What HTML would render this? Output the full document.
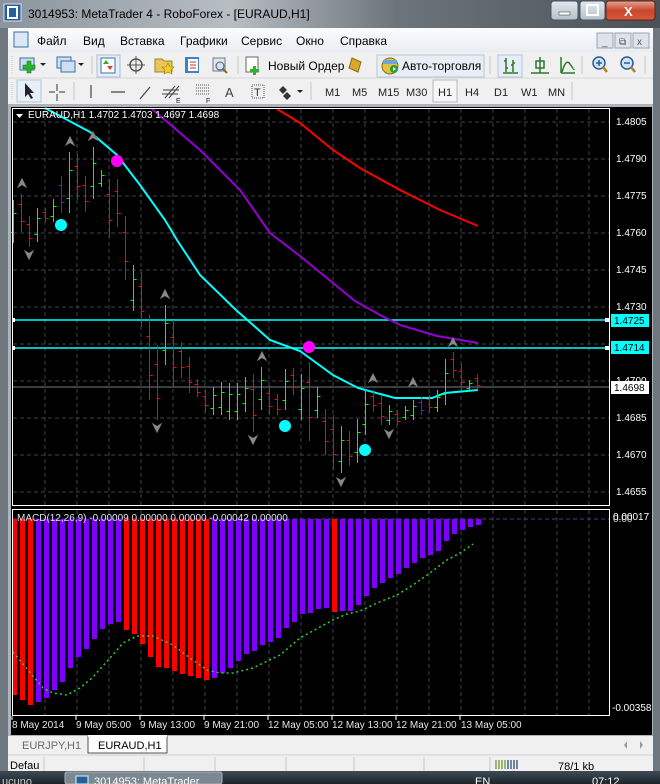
<!DOCTYPE html>
<html><head><meta charset="utf-8"><style>
html,body{margin:0;padding:0;width:660px;height:784px;overflow:hidden;background:#6c7680;}
svg{display:block;font-family:"Liberation Sans",sans-serif;}
</style></head><body>
<svg id="s" width="660" height="784" viewBox="0 0 660 784" xmlns="http://www.w3.org/2000/svg">
<defs>
<linearGradient id="tb" x1="0" y1="0" x2="1" y2="0"><stop offset="0" stop-color="#8b949c"/><stop offset=".35" stop-color="#b7bec4"/><stop offset=".6" stop-color="#6d757c"/><stop offset="1" stop-color="#4a5258"/></linearGradient>
<linearGradient id="mb" x1="0" y1="0" x2="0" y2="1"><stop offset="0" stop-color="#fbfcfd"/><stop offset="1" stop-color="#e9edf2"/></linearGradient>
<linearGradient id="cl" x1="0" y1="0" x2="0" y2="1"><stop offset="0" stop-color="#e8a493"/><stop offset=".5" stop-color="#c9462c"/><stop offset="1" stop-color="#d8593c"/></linearGradient>
<linearGradient id="bt" x1="0" y1="0" x2="0" y2="1"><stop offset="0" stop-color="#e3e8ee"/><stop offset="1" stop-color="#b5bfca"/></linearGradient>
<linearGradient id="tk" x1="0" y1="0" x2="0" y2="1"><stop offset="0" stop-color="#3d4a55"/><stop offset="1" stop-color="#1c252d"/></linearGradient>
</defs>
<rect x="0" y="0" width="660" height="30" fill="url(#tb)"/>
<rect x="0" y="28" width="660" height="756" fill="#6f777e"/>
<rect x="4" y="4" width="17" height="17" fill="#2a5d9c" stroke="#d7e3f0"/>
<rect x="8" y="7" width="9" height="11" fill="none" stroke="#fff" stroke-width="2"/>
<text x="28" y="18" font-size="12" fill="#000">3014953: MetaTrader 4 - RoboForex - [EURAUD,H1]</text>
<rect x="551" y="1" width="27" height="19" rx="3" fill="url(#bt)" stroke="#4a5560"/>
<rect x="559" y="12" width="11" height="3" fill="#fff" stroke="#333" stroke-width=".5"/>
<rect x="580" y="1" width="25" height="19" rx="3" fill="url(#bt)" stroke="#4a5560"/>
<rect x="587" y="5" width="11" height="10" fill="none" stroke="#fff" stroke-width="2"/>
<rect x="606" y="1" width="49" height="19" rx="3" fill="url(#cl)" stroke="#5a2418"/>
<text x="624" y="16" font-size="13" font-weight="bold" fill="#fff">X</text>
<rect x="8" y="28" width="645" height="742" fill="#f0f0f0"/>
<rect x="8" y="28" width="645" height="24" fill="url(#mb)"/>
<rect x="14" y="32" width="14" height="15" fill="#dce8f5" stroke="#3d6ea8"/>
<g font-size="12" fill="#000">
<text x="37" y="45">Файл</text><text x="83" y="45">Вид</text><text x="120" y="45">Вставка</text><text x="180" y="45">Графики</text><text x="241" y="45">Сервис</text><text x="296" y="45">Окно</text><text x="340" y="45">Справка</text>
</g>
<g fill="#dfe4ea" stroke="#9aa5b1"><rect x="597" y="33" width="16" height="15"/><rect x="615" y="33" width="16" height="15"/><rect x="633" y="33" width="16" height="15"/></g>
<g font-size="10" fill="#555"><text x="602" y="45">_</text><text x="619" y="45">⧉</text><text x="637" y="45">x</text></g>
<rect x="8" y="52" width="645" height="26" fill="#f0f0f0"/>
<line x1="8" y1="78" x2="653" y2="78" stroke="#d8d8d8"/>
<g stroke="#c8c8c8"><line x1="12" y1="56" x2="12" y2="74" stroke-dasharray="1 1"/><line x1="92" y1="56" x2="92" y2="74"/><line x1="238" y1="56" x2="238" y2="74"/><line x1="490" y1="56" x2="490" y2="74"/><line x1="582" y1="56" x2="582" y2="74"/><line x1="645" y1="56" x2="645" y2="74"/></g>
<rect x="20" y="58" width="14" height="12" fill="#cfe0f2" stroke="#3d6ea8"/><path d="M27 61h4v4h4v4h-4v4h-4v-4h-4v-4h4z" fill="#2cb52c" stroke="#1b6e1b" stroke-width=".6"/><path d="M40 63l3 3 3-3z" fill="#222"/>
<rect x="57" y="57" width="14" height="11" fill="#cfe0f2" stroke="#3d6ea8"/><rect x="61" y="61" width="14" height="11" fill="#cfe0f2" stroke="#3d6ea8"/><path d="M78 63l3 3 3-3z" fill="#222"/>
<rect x="97" y="55" width="23" height="22" fill="#e6eef7" stroke="#a9bfd7"/><rect x="101" y="58" width="14" height="15" fill="#fff" stroke="#3d6ea8"/><path d="M106 60l3 4h-6z" fill="#2cb52c"/><path d="M110 70l3-4h-6z" fill="#e04020"/>
<circle cx="136" cy="65" r="6" fill="none" stroke="#555" stroke-width="1.5"/><path d="M136 56v18M127 65h18" stroke="#555"/>
<path d="M155 59h7l2 2h8v11h-17z" fill="#e9c55a" stroke="#a58420"/><path d="M168 63l2 4 4 0-3 3 1 4-4-2-4 2 1-4-3-3 4 0z" fill="#f5d020" stroke="#9a7a10" stroke-width=".6"/>
<rect x="185" y="57" width="14" height="16" fill="#3d7fd1"/><rect x="188" y="59" width="10" height="12" fill="#fff"/><g stroke="#c33" stroke-width="1"><line x1="190" y1="62" x2="196" y2="62"/><line x1="190" y1="65" x2="196" y2="65"/><line x1="190" y1="68" x2="196" y2="68"/></g>
<rect x="213" y="58" width="12" height="13" fill="#dde6ef" stroke="#6b7c8f"/><circle cx="220" cy="66" r="4" fill="#cfe3f4" stroke="#555"/><path d="M223 69l4 4" stroke="#8b6b20" stroke-width="2"/>
<rect x="246" y="57" width="12" height="15" fill="#fff" stroke="#666"/><path d="M253 66h3v3h3v3h-3v3h-3v-3h-3v-3h3z" fill="#2cb52c"/>
<text x="268" y="70" font-size="12" fill="#000">Новый Ордер</text>
<path d="M352 58l9 4-3 10-9-4z" fill="#d9a830" stroke="#8a6a10"/>
<rect x="377" y="55" width="107" height="22" fill="#e8eef5" stroke="#b6c6d8"/>
<circle cx="390" cy="66" r="8" fill="#e6c040" stroke="#8a7010"/><path d="M383 60h14v4h-14z" fill="#6fa5d9"/><circle cx="394" cy="69" r="4" fill="#2c9c3a"/><path d="M393 67l3 2-3 2z" fill="#fff"/>
<text x="402" y="70" font-size="12" fill="#000">Авто-торговля</text>
<rect x="498" y="55" width="24" height="22" fill="#e6eef7" stroke="#b6c6d8"/>
<g stroke="#2a7a2a" stroke-width="1.5" fill="none"><path d="M506 58v14M504 61h2M506 68h2M513 60v12M511 65h2M513 63h2M503 73h15"/>
<path d="M540 57v16M536 61h8v7h-8zM531 73h18" /><path d="M561 73h14M562 72q4-14 8-8t4 5M561 57v16"/></g>
<circle cx="599" cy="63" r="6" fill="#cfe3f4" stroke="#2a5a9a" stroke-width="1.5"/><path d="M596 63h6M599 60v6" stroke="#2a5a9a" stroke-width="1.5"/><path d="M603 67l4 5" stroke="#b08020" stroke-width="2.5"/>
<circle cx="627" cy="63" r="6" fill="#cfe3f4" stroke="#2a5a9a" stroke-width="1.5"/><path d="M624 63h6" stroke="#2a5a9a" stroke-width="1.5"/><path d="M631 67l4 5" stroke="#b08020" stroke-width="2.5"/>
<g stroke="#c8c8c8"><line x1="12" y1="82" x2="12" y2="100" stroke-dasharray="1 1"/><line x1="74" y1="82" x2="74" y2="100"/><line x1="311" y1="82" x2="311" y2="100"/><line x1="572" y1="82" x2="572" y2="100"/></g>
<rect x="17" y="80" width="24" height="22" fill="#e6eef7" stroke="#b6c6d8"/>
<path d="M25 83v14l3-3 3 5 2-1-3-5h4z" fill="#222"/>
<path d="M57 84v7M57 94v7M49 92h6M59 92h6" stroke="#333"/>
<path d="M91 85v13M111 92h14M140 99l10-12" stroke="#444" stroke-width="1.2"/>
<path d="M165 98l10-12M169 98l10-12M163 90h16M162 94h16" stroke="#444"/><text x="176" y="103" font-size="7" fill="#222">E</text>
<g stroke="#555" stroke-dasharray="1 1"><path d="M196 85h14M196 88h14M196 91h14M196 94h14"/></g><text x="206" y="103" font-size="7" fill="#222">F</text>
<text x="225" y="97" font-size="13" fill="#444">A</text>
<rect x="252" y="85" width="12" height="13" fill="none" stroke="#555" stroke-dasharray="1 1"/><text x="254" y="96" font-size="11" fill="#333">T</text>
<path d="M283 86l4 4-4 4-4-4zM287 92l4 4-4 4-4-4z" fill="#333"/><path d="M297 90l3 3 3-3z" fill="#222"/>
<rect x="433" y="80" width="24" height="22" fill="#f6f6f6" stroke="#b8b8b8"/>
<g font-size="11" fill="#222"><text x="325" y="96">M1</text><text x="352" y="96">M5</text><text x="378" y="96">M15</text><text x="406" y="96">M30</text><text x="438" y="96">H1</text><text x="465" y="96">H4</text><text x="494" y="96">D1</text><text x="521" y="96">W1</text><text x="548" y="96">MN</text></g>
<rect x="8" y="104" width="645" height="632" fill="#aeb4ba"/>
<rect x="11" y="107" width="641" height="628" fill="#000"/>
<g id="grid" stroke="#3c444c" stroke-dasharray="4 3" stroke-width="1"></g>
<g id="chart"></g>
<rect x="12.5" y="108.5" width="597" height="397" fill="none" stroke="#fff"/>
<rect x="12.5" y="509.5" width="597" height="206" fill="none" stroke="#fff"/>
<g font-size="10" fill="#fff">
<path d="M16 114h7l-3.5 4z" fill="#fff"/>
<text x="28" y="118">EURAUD,H1  1.4702 1.4703 1.4697 1.4698</text>
<text x="616" y="125">1.4805</text><text x="616" y="162">1.4790</text><text x="616" y="199">1.4775</text><text x="616" y="236">1.4760</text><text x="616" y="273">1.4745</text><text x="616" y="310">1.4730</text><text x="616" y="384">1.4700</text><text x="616" y="421">1.4685</text><text x="616" y="458">1.4670</text><text x="616" y="495">1.4655</text>
</g>
<rect x="611" y="314" width="38" height="13" fill="#00ffff"/><text x="614" y="324" font-size="10" fill="#000">1.4725</text>
<rect x="611" y="341" width="38" height="13" fill="#00ffff"/><text x="614" y="351" font-size="10" fill="#000">1.4714</text>
<rect x="611" y="381" width="38" height="13" fill="#fff"/><text x="614" y="391" font-size="10" fill="#000">1.4698</text>
<g font-size="10" fill="#fff"><text x="613" y="520">0.00017</text><text x="613" y="522" opacity=".8">0.00</text><text x="612" y="711">-0.00358</text>
<text x="17" y="521" fill="#dde4ee">MACD(12,26,9) -0.00009 0.00000 0.00000 -0.00042 0.00000</text>
<g fill="#e6e6e6"><text x="12" y="728">8 May 2014</text><text x="76" y="728">9 May 05:00</text><text x="140" y="728">9 May 13:00</text><text x="204" y="728">9 May 21:00</text><text x="268" y="728">12 May 05:00</text><text x="332" y="728">12 May 13:00</text><text x="396" y="728">12 May 21:00</text><text x="461" y="728">13 May 05:00</text></g></g>
<g stroke="#fff"><path d="M12 716v4M76 716v4M140 716v4M204 716v4M268 716v4M332 716v4M396 716v4M460 716v4"/></g>
<rect x="8" y="736" width="645" height="19" fill="#f0f0f0"/>
<text x="22" y="749" font-size="11" fill="#6a6a6a">EURJPY,H1</text>
<rect x="88" y="736" width="79" height="17" fill="#fff" stroke="#555"/>
<rect x="88" y="735" width="79" height="2" fill="#fff"/>
<text x="98" y="749" font-size="11" fill="#000">EURAUD,H1</text>
<path d="M627 741v8l-3-4zM640 741v8l3-4z" fill="#999"/>
<rect x="8" y="755" width="645" height="16" fill="#f0f0f0"/><line x1="8" y1="755" x2="653" y2="755" stroke="#d0d0d0"/>
<g stroke="#c8c8c8"><path d="M44 757v14M144 757v14M215 757v14M286 757v14M354 757v14M424 757v14M490 757v14"/></g>
<text x="10" y="769" font-size="11" fill="#000">Defau</text>
<g stroke-width="1.2"><path d="M496 760v9M499 760v9M502 760v9M505 760v9" stroke="#6c8c20"/><path d="M508 760v9M511 760v9M514 760v9M517 760v9" stroke="#1c3c7a"/></g>
<text x="558" y="770" font-size="11" fill="#000">78/1 kb</text>
<rect x="0" y="771" width="660" height="13" fill="url(#tk)"/>
<rect x="65" y="772" width="157" height="12" rx="2" fill="#7c8791" stroke="#aab3bc"/>
<rect x="76" y="776" width="12" height="8" fill="#2a5d9c" stroke="#cfe"/>
<text x="94" y="785" font-size="11" fill="#fff">3014953: MetaTrader</text>
<text x="2" y="785" font-size="11" fill="#ccc">ucuno</text>
<text x="475" y="785" font-size="11" fill="#fff">EN</text>
<text x="592" y="785" font-size="11" fill="#fff">07:12</text>
</svg>
<script>
var NS="http://www.w3.org/2000/svg";
function el(p,t,a){var e=document.createElementNS(NS,t);for(var k in a)e.setAttribute(k,a[k]);p.appendChild(e);return e;}
var g=document.getElementById('grid'),c=document.getElementById('chart');
for(var k=1;k<=18;k++){var x=13+32*k;el(g,'line',{x1:x,y1:109,x2:x,y2:505});el(g,'line',{x1:x,y1:510,x2:x,y2:715});}
[122,159,196,233,270,307,344,381,418,455,492].forEach(function(y){el(g,'line',{x1:13,y1:y,x2:609,y2:y});});
el(g,'line',{x1:13,y1:519,x2:609,y2:519,stroke:'#4a3c8c'});
var mb=[[695,'r'],[700,'r'],[705,'r'],[702,'p'],[698,'p'],[690,'p'],[682,'p'],[668,'p'],[657,'p'],[649,'p'],[639,'p'],[629,'p'],[624,'p'],[622,'p'],[630,'r'],[634,'r'],[644,'r'],[657,'r'],[667,'r'],[668,'r'],[671,'r'],[674,'r'],[676,'r'],[678,'r'],[680,'r'],[678,'p'],[673,'p'],[668,'p'],[661,'p'],[654,'p'],[651,'p'],[645,'p'],[642,'p'],[638,'p'],[628,'p'],[622,'p'],[614,'p'],[613,'p'],[609,'p'],[608,'p'],[612,'r'],[611,'p'],[611,'p'],[605,'p'],[596,'p'],[588,'p'],[583,'p'],[578,'p'],[574,'p'],[568,'p'],[563,'p'],[558,'p'],[555,'p'],[551,'p'],[541,'p'],[534,'p'],[530,'p'],[527,'p'],[525,'p']];
mb.forEach(function(b,i){var x=12+8*i;el(c,'rect',{x:x,y:519,width:5,height:b[0]-519,fill:b[1]=='r'?'#ff0000':'#8000ff'});});
var sg=[[13,652],[43,688],[53,693],[67,695],[80,688],[93,677],[110,658],[123,643],[137,636],[153,636],[173,645],[190,658],[207,670],[220,673],[233,673],[253,668],[280,655],[300,638],[320,627],[333,620],[347,614],[360,611],[377,603],[397,595],[413,585],[430,573],[447,560],[460,553],[473,544]];
el(c,'polyline',{points:sg.map(function(p){return p.join(',')}).join(' '),fill:'none',stroke:'#2fd02f','stroke-dasharray':'2 3','stroke-width':1.5});
el(c,'line',{x1:13,y1:320,x2:608,y2:320,stroke:'#00ffff','stroke-width':1.5});
el(c,'line',{x1:13,y1:348,x2:608,y2:348,stroke:'#00ffff','stroke-width':1.5});
el(c,'rect',{x:605,y:318,width:4,height:4,fill:'#fff'});el(c,'rect',{x:605,y:346,width:4,height:4,fill:'#fff'});
el(c,'rect',{x:12,y:318,width:3,height:4,fill:'#fff'});el(c,'rect',{x:12,y:346,width:3,height:4,fill:'#fff'});
el(c,'line',{x1:13,y1:387,x2:609,y2:387,stroke:'#7a7f86'});
function pl(pts,col,w){el(c,'polyline',{points:pts,fill:'none',stroke:col,'stroke-width':w});}
pl('277,109 300,123 333,150 360,168 400,190 440,210 478,226','#ff0000',2);
pl('152,109 165,120 200,150 240,190 270,233 300,256 333,283 355,301 380,315 400,325 437,336 455,339 478,343','#9400d3',2);
pl('45,108 90,132 117,155 140,185 165,220 177,240 200,275 236,310 270,340 300,351 333,375 358,388 395,398 432,398 445,393 478,390','#00ffff',2);
var cd=[[13,200,243,'g'],[21,194,232,'r'],[29,216,247,'r'],[37,208,242,'g'],[45,208,222,'r'],[53,199,222,'g'],[61,176,213,'p'],[69,152,213,'g'],[77,154,200,'r'],[85,176,212,'r'],[93,147,199,'g'],[101,170,187,'g'],[109,179,237,'r'],[117,179,227,'r'],[125,216,280,'r'],[133,265,311,'g'],[141,272,327,'r'],[149,315,400,'r'],[157,345,420,'r'],[165,305,365,'g'],[173,320,387,'r'],[181,342,378,'r'],[189,357,393,'r'],[197,379,397,'r'],[205,390,412,'r'],[213,387,415,'g'],[221,382,415,'g'],[229,383,420,'g'],[237,383,420,'g'],[245,377,412,'g'],[253,374,432,'r'],[261,367,410,'g'],[269,385,415,'r'],[277,394,415,'r'],[285,369,410,'g'],[293,368,395,'r'],[301,374,420,'g'],[309,362,441,'r'],[317,387,418,'g'],[325,409,455,'r'],[333,415,470,'r'],[341,426,473,'g'],[349,431,466,'r'],[357,419,463,'g'],[365,390,435,'g'],[373,390,412,'r'],[381,395,425,'r'],[389,405,425,'g'],[397,410,425,'r'],[405,406,420,'g'],[413,400,420,'g'],[421,397,415,'p'],[429,395,412,'r'],[437,390,412,'g'],[445,359,405,'g'],[453,352,378,'r'],[461,364,390,'r'],[469,380,390,'g'],[477,374,390,'r']];
cd.forEach(function(d){var x=d[0]+.5,h=d[1],l=d[2],col=d[3]=='g'?'#00ff00':d[3]=='r'?'#ff0000':'#9400d3';
var o,cl;if(d[3]=='g'){o=l-(l-h)*.25;cl=h+(l-h)*.3;}else{o=h+(l-h)*.25;cl=l-(l-h)*.3;}
el(c,'path',{d:'M'+x+' '+h+'V'+l+'M'+(x-3)+' '+(Math.round(o)+.5)+'H'+x+'M'+x+' '+(Math.round(cl)+.5)+'H'+(x+3),stroke:col,'stroke-width':1,fill:'none'});});
[[61,225,'#00ffff'],[117,161,'#ff00ff'],[285,426,'#00ffff'],[309,347,'#ff00ff'],[365,450,'#00ffff']].forEach(function(p){el(c,'circle',{cx:p[0],cy:p[1],r:6,fill:p[2]});});
function up(x,y){el(c,'path',{d:'M'+x+' '+(y-6)+'l5 10-5-3-5 3z',fill:'#8a8a8a',stroke:'#555','stroke-width':.5});}
function dn(x,y){el(c,'path',{d:'M'+x+' '+(y+6)+'l5-10-5 3-5-3z',fill:'#8a8a8a',stroke:'#555','stroke-width':.5});}
[[70,142],[93,137],[22,184],[165,295],[262,357],[373,379],[413,383],[453,343]].forEach(function(p){up(p[0],p[1]);});
[[29,254],[157,427],[253,439],[341,481],[389,433]].forEach(function(p){dn(p[0],p[1]);});
</script>
</body></html>
